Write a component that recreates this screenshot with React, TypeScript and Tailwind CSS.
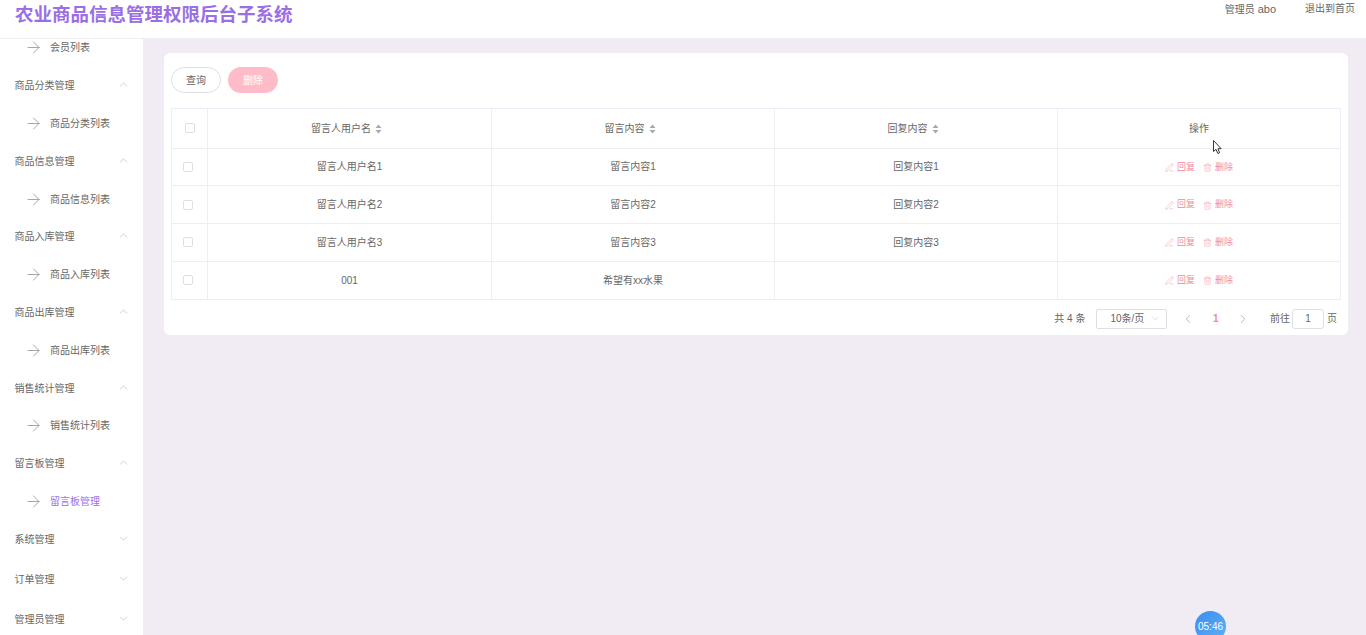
import React from "react";
import { ArrowRight, ChevronUp, ChevronDown, ChevronLeft, ChevronRight, PenLine, Trash2 } from "lucide-react";

type Group = { title: string; child?: string; active?: boolean };

const groups: Group[] = [
	{ title: "商品分类管理", child: "商品分类列表" },
	{ title: "商品信息管理", child: "商品信息列表" },
	{ title: "商品入库管理", child: "商品入库列表" },
	{ title: "商品出库管理", child: "商品出库列表" },
	{ title: "销售统计管理", child: "销售统计列表" },
	{ title: "留言板管理", child: "留言板管理", active: true },
	{ title: "系统管理" },
	{ title: "订单管理" },
	{ title: "管理员管理" },
];

const rows = [
	["留言人用户名1", "留言内容1", "回复内容1"],
	["留言人用户名2", "留言内容2", "回复内容2"],
	["留言人用户名3", "留言内容3", "回复内容3"],
	["001", "希望有xx水果", ""],
];

function SubItem({ label, active }: { label: string; active?: boolean }) {
	return (
		<div className="flex h-[37.8px] items-center pl-[24px]">
			<ArrowRight size={19} strokeWidth={1} className="text-[#8f8f8f]" />
			<span className={"ml-[7px] " + (active ? "text-[#9a6fe6]" : "text-[#666]")}>{label}</span>
		</div>
	);
}

function Sidebar() {
	return (
		<aside className="w-[143px] shrink-0 overflow-hidden bg-white text-[10px]">
			<div className="-mt-[10px]">
				<SubItem label="会员列表" />
				{groups.map((g) => (
					<div key={g.title}>
						<div className={"flex items-center justify-between pl-[14.5px] pr-[13px] text-[#666] " + (g.child ? "h-[37.8px]" : "h-[40px] pb-[2px]")}>
							<span>{g.title}</span>
							{g.child ? (
								<ChevronUp size={13} strokeWidth={1} className="-mt-[2px] text-[#aaa]" />
							) : (
								<ChevronDown size={13} strokeWidth={1} className="-mt-[2px] text-[#aaa]" />
							)}
						</div>
						{g.child && <SubItem label={g.child} active={g.active} />}
					</div>
				))}
			</div>
		</aside>
	);
}

function SortCaret() {
	return (
		<svg width="7" height="10" viewBox="0 0 7 10" className="mr-[6px] ml-[4px] inline-block text-[#a8a8a8]">
			<path d="M3.5 0.5 L6.5 4 H0.5 Z M3.5 9.5 L0.5 6 H6.5 Z" fill="currentColor" />
		</svg>
	);
}

function Checkbox({ shift }: { shift?: boolean }) {
	return <span className={"mx-auto block h-[10px] w-[10px] rounded-[2px] border border-[#dcdfe6] bg-white " + (shift ? "-translate-x-[2px]" : "")} />;
}

function Table() {
	const cell = "border-r border-b border-[#ebeef5] text-center";
	return (
		<table className="w-[1169px] table-fixed border-collapse border-t border-l border-[#ebeef5] text-[10px] text-[#666]">
			<colgroup>
				<col className="w-[36px]" />
				<col className="w-[284px]" />
				<col className="w-[283px]" />
				<col className="w-[283px]" />
				<col className="w-[283px]" />
			</colgroup>
			<thead>
				<tr className="h-[39.5px]">
					<th className={cell + " font-normal"}><Checkbox /></th>
					<th className={cell + " font-normal"}>留言人用户名<SortCaret /></th>
					<th className={cell + " font-normal"}>留言内容<SortCaret /></th>
					<th className={cell + " font-normal"}>回复内容<SortCaret /></th>
					<th className={cell + " font-normal"}>操作</th>
				</tr>
			</thead>
			<tbody>
				{rows.map((r, i) => (
					<tr key={i} className="h-[37.75px]">
						<td className={cell}><Checkbox shift /></td>
						<td className={cell}>{r[0]}</td>
						<td className={cell}>{r[1]}</td>
						<td className={cell}>{r[2]}</td>
						<td className={cell}>
							<div className="flex items-center justify-center pt-[1px] text-[9px] text-[#f28b9b]">
								<PenLine size={9} strokeWidth={1.2} />
								<span className="ml-[3px]">回复</span>
								<Trash2 size={9} strokeWidth={1.2} className="ml-[8px]" />
								<span className="ml-[3px]">删除</span>
							</div>
						</td>
					</tr>
				))}
			</tbody>
		</table>
	);
}

function Pagination() {
	return (
		<div className="flex h-[35.5px] items-center justify-end pt-[3px] pr-[4px] text-[10px] text-[#666]">
			<span>共 4 条</span>
			<div className="ml-[11px] flex h-[20px] w-[71px] items-center justify-between rounded-[2px] border border-[#dcdfe6] pl-[13px] pr-[5px]">
				<span>10条/页</span>
				<ChevronDown size={11} strokeWidth={1} className="text-[#bbb]" />
			</div>
			<ChevronLeft size={14} strokeWidth={1.2} className="ml-[14px] text-[#999]" />
			<span className="ml-[17.5px] font-bold text-[#f28b9b]">1</span>
			<ChevronRight size={14} strokeWidth={1.2} className="ml-[17.5px] text-[#999]" />
			<span className="ml-[20px]">前往</span>
			<div className="ml-[2px] flex h-[20px] w-[32px] items-center justify-center rounded-[3px] border border-[#dcdfe6]">1</div>
			<span className="ml-[3px]">页</span>
		</div>
	);
}

export default function App() {
	return (
		<div className="flex h-screen flex-col overflow-hidden bg-[#f1ecf4] font-['Liberation_Sans','Noto_Sans_CJK_SC',sans-serif]">
			<header className="flex h-[39px] shrink-0 justify-between border-b border-[#f0eef2] bg-white pl-[15px] pr-[11px]">
				<h1 className="text-[18.5px] leading-[30px] font-bold text-[#9a6fe6]">农业商品信息管理权限后台子系统</h1>
				<div className="flex gap-[29px] pt-[1px] text-[10px] leading-[16px] text-[#666]">
					<span>管理员 <span className="text-[11px]">abo</span></span>
					<span>退出到首页</span>
				</div>
			</header>
			<div className="flex min-h-0 flex-1">
				<Sidebar />
				<main className="flex-1 pt-[14px] pl-[21px] pr-[18px]">
					<section className="rounded-[6px] bg-white px-[7px] pt-[14px]">
						<div className="mb-[15px] flex gap-[7px] text-[10px]">
							<button className="h-[26px] w-[50px] rounded-full border border-[#dcdfe6] bg-white text-[#666]">查询</button>
							<button className="h-[26px] w-[50px] rounded-full bg-[#ffbcc8] text-white">删除</button>
						</div>
						<Table />
						<Pagination />
					</section>
				</main>
			</div>
			{/* screen recorder timer */}
			<div className="absolute top-[611px] left-[1195px] flex h-[31px] w-[31px] items-start justify-center rounded-full bg-linear-to-br from-[#3d8bf0] to-[#5cb2f6] pt-[7px] text-[10px] leading-[17px] text-white shadow-[0_0_0_1px_#e3f0fc]">
				05:46
			</div>
			<svg className="absolute top-[140px] left-[1213px]" width="10" height="15" viewBox="0 0 10 15">
				<path d="M0.5 0.5 V11.5 L3 9.3 L4.8 13.5 L6.6 12.7 L4.9 8.7 H8.2 Z" fill="#fff" stroke="#222" strokeWidth="0.9" />
			</svg>
		</div>
	);
}
